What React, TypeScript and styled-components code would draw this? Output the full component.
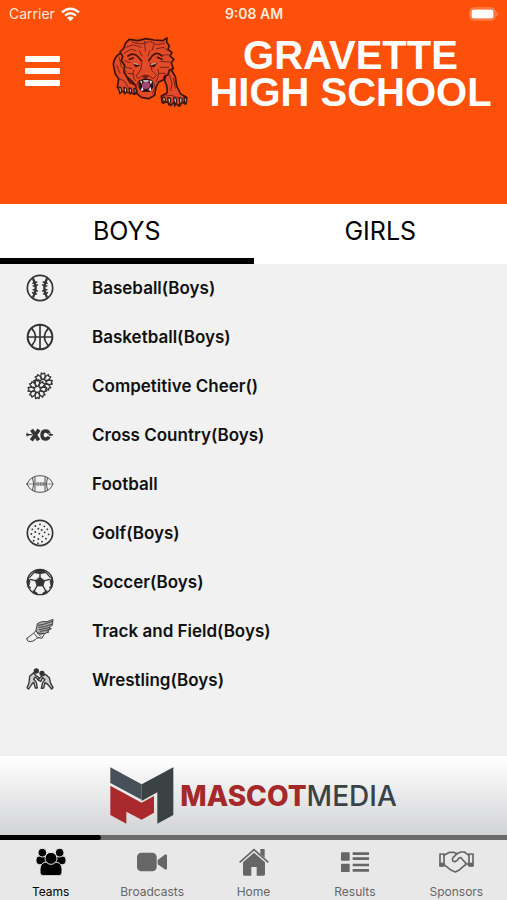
import React, { useState } from "react";
import styled, { createGlobalStyle } from "styled-components";

const GlobalStyle = createGlobalStyle`
  *, *::before, *::after { box-sizing: border-box; }
  body { margin: 0; font-family: Inter, "Liberation Sans", sans-serif; background: #f1f1f1; }
  button { font: inherit; border: 0; padding: 0; background: none; cursor: pointer; }
  svg { display: block; }
`;

const Screen = styled.div`
  min-height: 100vh;
  display: flex;
  flex-direction: column;
`;

const Header = styled.header`
  height: 204px;
  background: #fd500a;
  color: #fff;
`;

const StatusBar = styled.div`
  display: grid;
  grid-template-columns: 1fr auto 1fr;
  align-items: center;
  height: 28px;
  padding: 0 8px 0 9px;
  font-size: 14px;
  line-height: 28px;
  color: #ffe9dd;
`;

const Carrier = styled.span`
  display: flex;
  align-items: center;
  gap: 6px;
`;

const Clock = styled.time`
  font-weight: 600;
`;

const BatterySlot = styled.span`
  justify-self: end;
`;

const Brand = styled.div`
  display: flex;
  align-items: flex-start;
  padding: 8px 15px 0 25px;
`;

const MenuButton = styled.button`
  display: flex;
  flex-direction: column;
  gap: 6px;
  width: 35px;
  margin: 20px 52px 0 0;
`;

const MenuLine = styled.span`
  width: 100%;
  height: 6px;
  border-radius: 1px;
  background: #fff;
`;

const SchoolName = styled.h1`
  flex: 1;
  margin: 0;
  padding: 1px 0 0 20px;
  font: bold 40px/37px "Liberation Sans", Arial, sans-serif;
  text-align: center;
  white-space: nowrap;
`;

const GenderTabs = styled.div`
  display: flex;
  background: #fff;
`;

const GenderTab = styled.button<{ $active: boolean }>`
  flex: 1;
  height: 60px;
  padding-bottom: 1px;
  border-bottom: 6px solid ${(p) => (p.$active ? "#000" : "#fff")};
  font-size: 25px;
  color: #000;
`;

const SportList = styled.ul`
  flex: 1;
  margin: 0;
  padding: 0;
  list-style: none;
`;

const SportRow = styled.button`
  display: flex;
  align-items: center;
  gap: 37px;
  width: 100%;
  height: 49px;
  padding: 0 25px 2px;
  font-size: 17px;
  font-weight: 600;
  color: #111;
  text-align: left;
`;

const Sponsor = styled.a`
  display: flex;
  align-items: center;
  justify-content: center;
  gap: 6px;
  height: 79px;
  background: linear-gradient(#fff, #d2d3d5);
  color: #3b4245;
  text-decoration: none;
`;

const SponsorName = styled.span`
  font-size: 28px;
  font-weight: 500;
`;

const SponsorStrong = styled.strong`
  font-weight: 800;
  color: #a5282b;
`;

const Track = styled.div`
  height: 5px;
  background: #6b6b6b;
`;

const Thumb = styled.div`
  width: 20%;
  height: 5px;
  border-radius: 0 3px 3px 0;
  background: #000;
`;

const BottomNav = styled.nav`
  display: flex;
  height: 60px;
  background: #e8e8e8;
`;

const NavItem = styled.button<{ $active: boolean }>`
  flex: 1 1 0;
  display: flex;
  flex-direction: column;
  align-items: center;
  padding-top: 5px;
  font-size: 12px;
  line-height: 16px;
  color: ${(p) => (p.$active ? "#000" : "#666")};
`;

const NavIcon = styled.span`
  display: grid;
  place-items: center;
  height: 34px;
  margin-bottom: 5px;
`;

const WifiIcon = () => (
  <svg width="19" height="15" viewBox="0 0 57 45" fill="none" stroke="#fff" strokeWidth="7" aria-hidden="true">
    <path d="M3 16Q28 -6 54 16" />
    <path d="M12 26Q28 12 45 26" />
    <path d="M28 43L18 32Q28 25 38 32Z" fill="#fff" stroke="none" />
  </svg>
);

const BatteryIcon = () => (
  <svg width="30" height="14" viewBox="0 0 30 14" aria-hidden="true">
    <rect x="1" y="1" width="25" height="12" rx="3.5" fill="none" stroke="#ff9c70" />
    <rect x="2.5" y="2.5" width="22" height="9" rx="2" fill="#fff" />
    <path d="M27.5 4.5Q30 7 27.5 9.5Z" fill="#ff9c70" />
  </svg>
);

const LionLogo = () => (
  <svg width="77" height="72" viewBox="40 24 231 216" role="img" aria-label="Gravette Lions" strokeLinejoin="round" strokeLinecap="round">
    <g fill="#e34a28" stroke="#40130a" strokeWidth="5">
      <path d="M66 76Q46 86 44 110L50 138L60 152L56 178L66 190L80 192L108 198L120 188L116 172L94 164L86 150L98 130L80 84Z" />
      <path d="M204 128L218 126L230 146L234 174L246 198L264 208L262 228L248 222L240 234L228 222L216 232L206 222L190 224L188 204L206 194L204 172L198 158Z" />
      <path d="M64 72L76 60L80 46L92 34L118 38L142 32L166 36L192 38L205 30L204 42L212 54L208 64L220 74L214 84L226 94L218 104L224 122L212 126L208 140L198 144L194 156L180 162L172 178L168 202L150 212L128 208L114 196L112 174L98 158L84 146L76 132L78 112L68 98L72 86Z" />
    </g>
    <g fill="none" stroke="#782416" strokeWidth="3">
      <path d="M76 76L96 64L112 68M82 58L104 50L128 58M100 42L126 48L150 42M154 40L174 50L198 46M174 62L196 58L206 68M184 82L210 80M186 100L214 102M184 118L210 118M180 136L200 136M78 98L94 104M82 118L100 122M88 136L106 138M122 68L130 84M154 68L148 84M138 40L140 70M166 50L160 66M62 88L68 116L84 132M54 112L64 136M60 152L76 158L88 176M212 140L220 166L216 188M224 150L230 180M198 204L218 202L242 210" />
      <path d="M130 100L126 126L112 144L118 152L134 142L148 142L164 152L174 142L160 128L154 104M106 126Q98 142 110 158M178 124Q184 142 172 160M118 160L112 178L118 192M166 162L168 178L162 196" />
    </g>
    <g fill="none" stroke="#45140b" strokeWidth="5">
      <path d="M88 84Q104 72 118 86L128 98M190 84Q176 70 162 82L150 98M92 94L104 90M176 88L190 94" />
      <path d="M104 106L122 112L112 117ZM154 112L174 106L166 117Z" fill="#250b08" strokeWidth="2" />
    </g>
    <path d="M106 106L117 109M158 110L170 106" stroke="#bda997" strokeWidth="4" />
    <path d="M130 144L138 140L150 144L144 152H136Z" fill="#762015" />
    <path d="M122 158L140 153L160 157L162 178L154 190L130 190L122 180Z" fill="#261416" stroke="#260b08" strokeWidth="3" />
    <ellipse cx="142" cy="172" rx="12" ry="11" fill="#a54773" />
    <path d="M124 158L130 159L129 169ZM152 158L160 158L157 170ZM126 188L131 176L135 187ZM149 187L156 176L158 188ZM133 157H151L148 161H135Z" fill="#e7edf0" />
    <g fill="#c4c8cd" stroke="#391711" strokeWidth="4">
      <path d="M60 178Q70 174 68 192L63 197ZM76 178Q88 178 83 192L78 198ZM91 180Q102 180 98 194L94 198ZM106 181Q116 182 111 195L107 200Z" />
      <path d="M191 208Q202 206 200 218L195 226ZM207 209Q220 208 215 223L210 231ZM225 209Q238 209 232 224L228 235ZM242 209Q255 209 249 224L244 234ZM256 207Q267 210 262 223L258 228Z" />
    </g>
  </svg>
);

const SportSvg = styled.svg`
  flex: none;
  width: 30px;
  height: 30px;
  fill: none;
  stroke: #333;
  stroke-width: 5;
  stroke-linejoin: round;
  stroke-linecap: round;
`;

const petals = [0, 45, 90, 135, 180, 225, 270, 315];

const Pom = ({ x, y }: { x: number; y: number }) => (
  <g transform={`translate(${x} ${y})`}>
    {petals.map((angle) => (
      <path key={angle} transform={`rotate(${angle})`} d="M0 -6L-7 -17L-5 -28L0 -25L5 -28L7 -17Z" fill="#f1f1f1" strokeWidth="4" />
    ))}
    <circle r="7" fill="#f1f1f1" stroke="none" />
  </g>
);

const golfDots = [
  [45, 19], [31, 24], [58, 25], [22, 34], [40, 32], [50, 36], [67, 34],
  [31, 42], [59, 43], [19, 48], [43, 47], [71, 49], [28, 57], [53, 55],
  [40, 63], [63, 62], [26, 68], [51, 71], [39, 76],
];

const icons: Record<string, React.ReactNode> = {
  baseball: (
    <>
      <circle cx="45" cy="45" r="38" />
      <path d="M25 19Q39 44 25 71M65 19Q51 44 65 71" strokeWidth="7" />
      <path d="M24 31L35 27M25 39L37 36M25 50L37 54M23 59L34 63M66 31L55 27M65 39L53 36M65 50L53 54M67 59L56 63" strokeWidth="5" />
    </>
  ),
  basketball: (
    <>
      <circle cx="45" cy="45" r="37" strokeWidth="6" />
      <path d="M45 8V82M8 45H82M21 20Q43 45 21 70M69 20Q47 45 69 70" strokeWidth="5" />
    </>
  ),
  cheer: (
    <>
      <Pom x={54} y={34} />
      <Pom x={37} y={55} />
    </>
  ),
  xc: (
    <>
      <path d="M5 44H19M72 44H82" strokeWidth="4" />
      <path d="M6 39L14 44L6 49ZM75 40L83 44L75 48Z" fill="#333" strokeWidth="1" />
      <path d="M20 29L41 61M42 29L19 61" strokeWidth="11" strokeLinecap="butt" />
      <path d="M72 40Q69 32 60 33Q51 34 51 45Q51 57 60 57Q69 58 72 50" strokeWidth="10" strokeLinecap="butt" />
    </>
  ),
  football: (
    <g strokeWidth="3" stroke="#505050">
      <path d="M6 45Q16 20 45 20Q74 20 84 45Q74 70 45 70Q16 70 6 45ZM23 28Q30 45 23 62M67 28Q60 45 67 62M30 24V66M60 24V66" />
      <path d="M6 45H84M36 40V50M41 40V50M46 40V50M51 40V50M56 40V50" strokeWidth="2" />
    </g>
  ),
  golf: (
    <>
      <circle cx="45" cy="45" r="38" />
      {golfDots.map(([x, y]) => (
        <circle key={`${x}-${y}`} cx={x} cy={y} r="2.8" fill="#333" stroke="none" />
      ))}
    </>
  ),
  soccer: (
    <>
      <circle cx="45" cy="45" r="38" strokeWidth="4" />
      <path d="M45 31L59 41L54 57H36L31 41ZM32 10L45 7L58 10L63 17L45 20L27 17ZM9 32L15 43L12 56L18 63L9 60L6 45ZM81 32L75 43L78 56L72 63L81 60L84 45ZM25 71L36 77L37 83L26 79ZM65 71L54 77L53 83L64 79Z" fill="#333" strokeWidth="2" />
      <path d="M45 20V32M31 41L15 37M59 41L75 37M36 57L27 73M54 57L63 73M27 17L14 31M63 17L76 31" strokeWidth="4" />
    </>
  ),
  track: (
    <g strokeWidth="3" stroke="#444">
      <path d="M6 67L29 49L33 43L38 52Q46 58 59 51L51 67L42 65L34 67Q26 79 10 76Q4 73 6 67ZM28 53L37 64L42 65M38 52L47 61" fill="#f1f1f1" />
      <path d="M33 43L37 23Q48 14 66 17L84 10L82 28L72 36L79 38L67 45L72 48L58 53L39 51Z" fill="#aaa" />
      <path d="M39 28L56 25L83 16M41 34L58 32L80 25M43 41L58 38L74 34M46 46L60 44L72 40" />
    </g>
  ),
  wrestling: (
    <g strokeWidth="4">
      <circle cx="34" cy="18" r="6" fill="#333" />
      <circle cx="51" cy="25" r="6" fill="#333" />
      <path d="M26 23L14 34L12 54L6 68L11 72L21 57L26 52L31 69L37 69L34 52L26 42L30 36L41 45L45 40L31 30Z" fill="#ccc" />
      <path d="M61 28L73 38L77 55L84 68L80 72L68 58L60 53L56 69L49 70L53 52L60 44L53 38L47 49L39 45L49 34Z" fill="#ccc" />
    </g>
  ),
};

const sports = [
  { icon: "baseball", label: "Baseball(Boys)" },
  { icon: "basketball", label: "Basketball(Boys)" },
  { icon: "cheer", label: "Competitive Cheer()" },
  { icon: "xc", label: "Cross Country(Boys)" },
  { icon: "football", label: "Football" },
  { icon: "golf", label: "Golf(Boys)" },
  { icon: "soccer", label: "Soccer(Boys)" },
  { icon: "track", label: "Track and Field(Boys)" },
  { icon: "wrestling", label: "Wrestling(Boys)" },
];

const MascotMark = () => (
  <svg width="64" height="57" viewBox="60 53 192 171" aria-hidden="true">
    <path d="M61 54L155 105V151L61 101Z" fill="#475058" />
    <path d="M155 105L250 54V197L202 223V129L155 155Z" fill="#3b4244" />
    <path d="M61 109L155 160L192 140V190L155 211L109 187V223L61 197Z" fill="#aa292c" />
  </svg>
);

const TeamsIcon = () => (
  <svg width="30" height="28" viewBox="0 0 90 84" fill="currentColor" stroke="#e8e8e8" strokeWidth="3" aria-hidden="true">
    <rect x="0" y="24" width="34" height="26" rx="10" />
    <rect x="56" y="24" width="34" height="26" rx="10" />
    <circle cx="19" cy="14" r="13" />
    <circle cx="71" cy="14" r="13" />
    <path d="M26 43H64Q78 47 78 64V74Q78 83 68 83H22Q12 83 12 74V64Q12 47 26 43Z" />
    <circle cx="45" cy="31" r="18" />
  </svg>
);

const VideoIcon = () => (
  <svg width="30" height="20" viewBox="0 0 90 60" fill="currentColor" aria-hidden="true">
    <rect y="2" width="59" height="56" rx="13" />
    <path d="M62 24L83 8Q90 4 90 12V48Q90 56 83 52L62 37Z" />
  </svg>
);

const HomeIcon = () => (
  <svg width="30" height="28" viewBox="0 0 90 84" fill="currentColor" aria-hidden="true">
    <path d="M2 43L45 5L88 43" fill="none" stroke="currentColor" strokeWidth="5" />
    <path d="M64 3H77V29L64 18ZM45 14L78 43V79Q78 83 74 83H53V57H37V83H16Q12 83 12 79V43Z" />
  </svg>
);

const ResultsIcon = () => (
  <svg width="28" height="20" viewBox="0 0 84 60" fill="currentColor" aria-hidden="true">
    <rect y="1" width="26" height="25" rx="2" />
    <rect y="35" width="26" height="25" rx="2" />
    <path d="M35 1H84V9H35ZM35 16H84V24H35ZM35 35H84V43H35ZM35 51H84V59H35Z" />
  </svg>
);

const HandshakeIcon = () => (
  <svg width="35" height="22" viewBox="0 0 105 66" fill="none" stroke="currentColor" strokeWidth="5" strokeLinejoin="round" strokeLinecap="round" aria-hidden="true">
    <path d="M3 9H15V45H3ZM90 9H102V45H90Z" />
    <path d="M3 36H15V45H3ZM90 36H102V45H90Z" fill="currentColor" strokeWidth="2" />
    <path d="M15 13L32 4H44L54 8L65 3H76L90 13" />
    <path d="M54 8L42 20Q37 29 46 32Q52 33 59 22Q65 17 69 24L80 36Q82 43 73 46L62 56L49 63L37 58L15 41" />
    <path d="M80 37L90 41" />
  </svg>
);

const navItems = [
  { label: "Teams", icon: <TeamsIcon /> },
  { label: "Broadcasts", icon: <VideoIcon /> },
  { label: "Home", icon: <HomeIcon /> },
  { label: "Results", icon: <ResultsIcon /> },
  { label: "Sponsors", icon: <HandshakeIcon /> },
];

export default function App() {
  const [gender, setGender] = useState("BOYS");
  return (
    <Screen>
      <GlobalStyle />
      <Header>
        <StatusBar>
          <Carrier>Carrier <WifiIcon /></Carrier>
          <Clock>9:08 AM</Clock>
          <BatterySlot><BatteryIcon /></BatterySlot>
        </StatusBar>
        <Brand>
          <MenuButton aria-label="Open menu">
            <MenuLine />
            <MenuLine />
            <MenuLine />
          </MenuButton>
          <LionLogo />
          <SchoolName>GRAVETTE<br />HIGH SCHOOL</SchoolName>
        </Brand>
      </Header>
      <GenderTabs role="tablist">
        {["BOYS", "GIRLS"].map((name) => (
          <GenderTab key={name} role="tab" aria-selected={gender === name} $active={gender === name} onClick={() => setGender(name)}>
            {name}
          </GenderTab>
        ))}
      </GenderTabs>
      <SportList>
        {sports.map(({ icon, label }) => (
          <li key={label}>
            <SportRow>
              <SportSvg viewBox="0 0 90 90" aria-hidden="true">{icons[icon]}</SportSvg>
              {label}
            </SportRow>
          </li>
        ))}
      </SportList>
      <Sponsor href="#sponsor">
        <MascotMark />
        <SponsorName><SponsorStrong>MASCOT</SponsorStrong>MEDIA</SponsorName>
      </Sponsor>
      <Track><Thumb /></Track>
      <BottomNav>
        {navItems.map(({ label, icon }, index) => (
          <NavItem key={label} $active={index === 0}>
            <NavIcon>{icon}</NavIcon>
            {label}
          </NavItem>
        ))}
      </BottomNav>
    </Screen>
  );
}
